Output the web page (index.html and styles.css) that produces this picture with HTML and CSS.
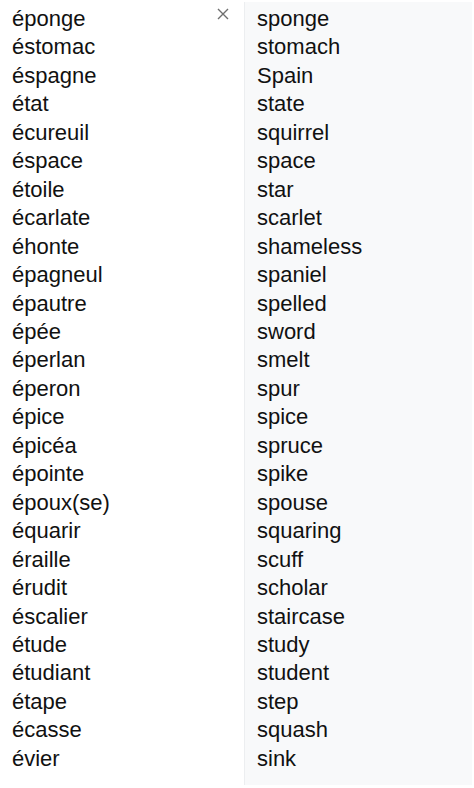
FILE: index.html
```html
<!DOCTYPE html>
<html>
<head>
<meta charset="utf-8">
<link rel="stylesheet" href="styles.css">
</head>
<body>
<div class="wrap">
  <div class="col src">
    <button class="close" aria-label="Fermer">
      <svg width="12" height="12" viewBox="0 0 12 12"><path d="M1 1L11 11M11 1L1 11" stroke="#6f6f6f" stroke-width="1.4" fill="none"/></svg>
    </button>
    <div class="w">éponge</div>
    <div class="w">éstomac</div>
    <div class="w">éspagne</div>
    <div class="w">état</div>
    <div class="w">écureuil</div>
    <div class="w">éspace</div>
    <div class="w">étoile</div>
    <div class="w">écarlate</div>
    <div class="w">éhonte</div>
    <div class="w">épagneul</div>
    <div class="w">épautre</div>
    <div class="w">épée</div>
    <div class="w">éperlan</div>
    <div class="w">éperon</div>
    <div class="w">épice</div>
    <div class="w">épicéa</div>
    <div class="w">épointe</div>
    <div class="w">époux(se)</div>
    <div class="w">équarir</div>
    <div class="w">éraille</div>
    <div class="w">érudit</div>
    <div class="w">éscalier</div>
    <div class="w">étude</div>
    <div class="w">étudiant</div>
    <div class="w">étape</div>
    <div class="w">écasse</div>
    <div class="w">évier</div>
  </div>
  <div class="col dst">
    <div class="w">sponge</div>
    <div class="w">stomach</div>
    <div class="w">Spain</div>
    <div class="w">state</div>
    <div class="w">squirrel</div>
    <div class="w">space</div>
    <div class="w">star</div>
    <div class="w">scarlet</div>
    <div class="w">shameless</div>
    <div class="w">spaniel</div>
    <div class="w">spelled</div>
    <div class="w">sword</div>
    <div class="w">smelt</div>
    <div class="w">spur</div>
    <div class="w">spice</div>
    <div class="w">spruce</div>
    <div class="w">spike</div>
    <div class="w">spouse</div>
    <div class="w">squaring</div>
    <div class="w">scuff</div>
    <div class="w">scholar</div>
    <div class="w">staircase</div>
    <div class="w">study</div>
    <div class="w">student</div>
    <div class="w">step</div>
    <div class="w">squash</div>
    <div class="w">sink</div>
  </div>
</div>
</body>
</html>
```
FILE: styles.css
```css
html, body {
  margin: 0;
  padding: 0;
  background: #ffffff;
}
body {
  font-family: "Liberation Sans", Arial, sans-serif;
  font-size: 22px;
  color: #111111;
}
.wrap {
  display: flex;
  align-items: flex-start;
  width: 472px;
}
.col {
  display: flex;
  flex-direction: column;
  box-sizing: border-box;
}
.w {
  line-height: 28.46px;
  white-space: nowrap;
}
.src {
  position: relative;
  width: 244px;
  padding: 5px 0 0 12px;
}
.dst {
  width: 228px;
  height: 783px;
  margin-top: 2px;
  padding: 3px 0 0 12px;
  background: #f8f9fa;
  border-left: 1px solid #eceef0;
}
.close {
  position: absolute;
  top: 8px;
  left: 217px;
  width: 12px;
  height: 12px;
  padding: 0;
  border: 0;
  background: none;
  display: flex;
}
```
